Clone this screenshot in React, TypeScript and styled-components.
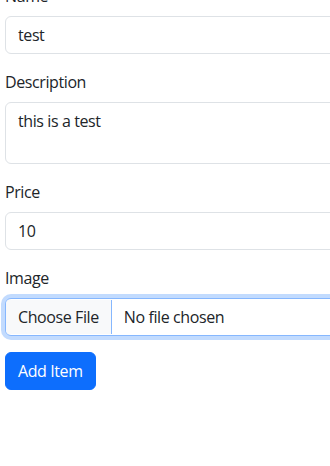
import styled, { createGlobalStyle, css } from 'styled-components'

const GlobalStyle = createGlobalStyle`
  html, body {
    margin: 0;
    padding: 0;
    background: #fff;
    overflow: hidden;
  }
  body {
    font-family: "Open Sans", "Noto Sans", sans-serif;
    font-size: 16px;
    line-height: 1.5;
    color: #212529;
  }
  * { box-sizing: border-box; }
`

const Form = styled.form`
  width: 420px;
  margin-top: -16px;
  padding-left: 5px;
  display: flex;
  flex-direction: column;
  align-items: flex-start;
`

const Field = styled.div`
  width: 100%;
  margin-bottom: 16px;
  display: flex;
  flex-direction: column;
`

const Label = styled.label`
  margin-bottom: 8px;
  font-size: 16px;
  line-height: 24px;
  letter-spacing: -0.4px;
`

const controlStyles = css<{ $focused?: boolean }>`
  display: block;
  width: 100%;
  padding: 6px 12px;
  font-family: inherit;
  font-size: 16px;
  line-height: 24px;
  letter-spacing: -0.4px;
  color: #212529;
  background: #fff;
  border: 1px solid #dee2e6;
  border-radius: 6px;
  outline: none;
  ${({ $focused }) =>
    $focused &&
    css`
      border-color: #86b7fe;
      box-shadow: 0 0 0 4px rgba(13, 110, 253, 0.25);
    `}
`

const Input = styled.input<{ $focused?: boolean }>`
  ${controlStyles}
  height: 38px;
`

const TextArea = styled.textarea<{ $focused?: boolean }>`
  ${controlStyles}
  height: 62px;
  resize: none;
`

const FileInput = styled.input<{ $focused?: boolean }>`
  ${controlStyles}
  height: 38px;
  overflow: hidden;

  &::file-selector-button {
    padding: 6px 12px;
    margin: -6px 12px -6px -12px;
    font-family: inherit;
    font-size: 16px;
    letter-spacing: -0.4px;
    color: #212529;
    background: #f8f9fa;
    border: 0 solid;
    border-color: inherit;
    border-inline-end-width: 1px;
    border-radius: 0;
  }
`

const Button = styled.button`
  padding: 6px 12px;
  font-family: inherit;
  font-size: 16px;
  line-height: 24px;
  letter-spacing: -0.4px;
  color: #fff;
  background: #0d6efd;
  border: 1px solid #0d6efd;
  border-radius: 6px;
`

const App = () => {
  return (
    <>
      <GlobalStyle />
      <Form onSubmit={(e) => e.preventDefault()}>
        <Field>
          <Label>Name</Label>
          <Input type="text" defaultValue="test" />
        </Field>
        <Field>
          <Label>Description</Label>
          <TextArea defaultValue="this is a test" />
        </Field>
        <Field>
          <Label>Price</Label>
          <Input type="number" defaultValue="10" />
        </Field>
        <Field>
          <Label>Image</Label>
          <FileInput type="file" $focused />
        </Field>
        <Button type="submit">Add Item</Button>
      </Form>
    </>
  )
}

export default App
